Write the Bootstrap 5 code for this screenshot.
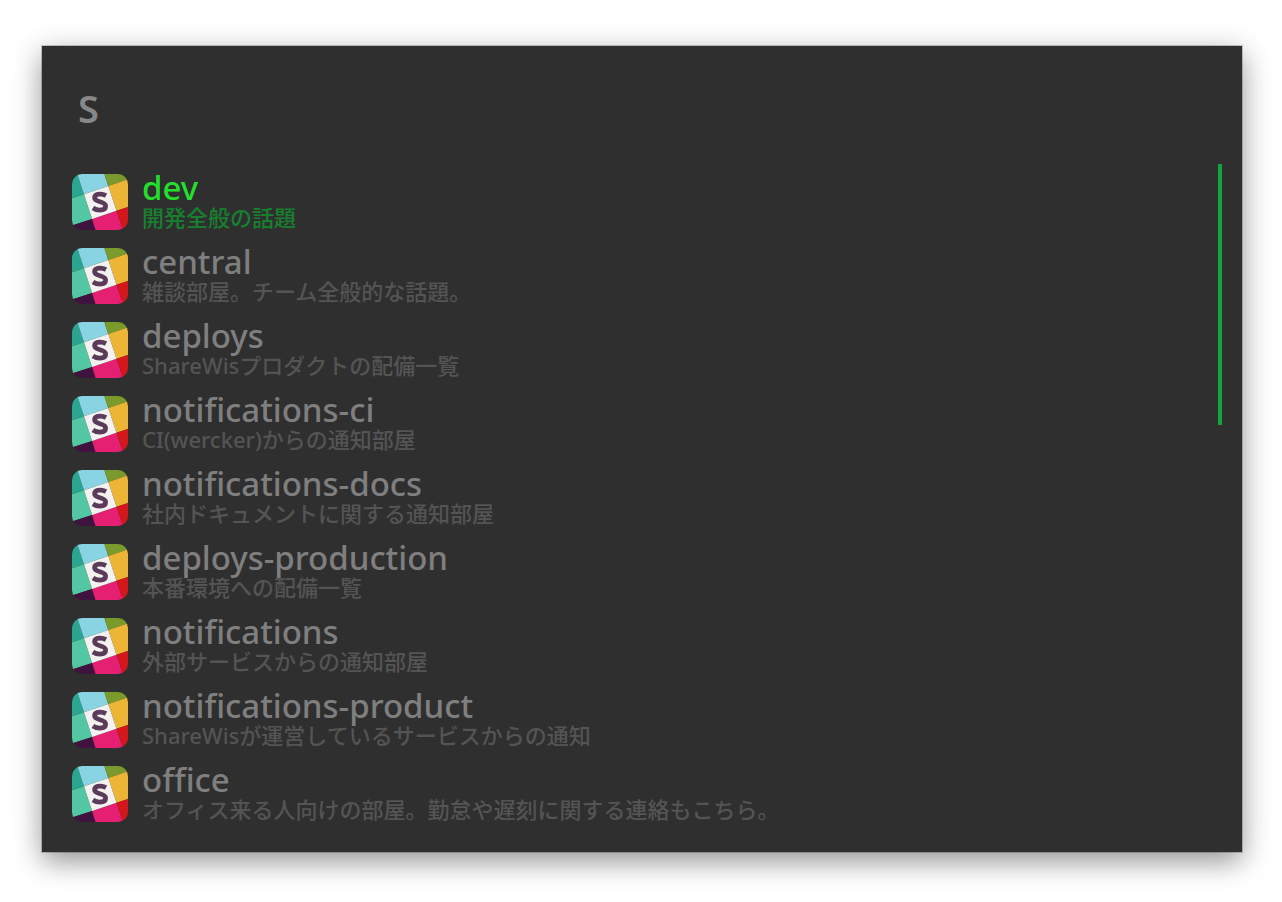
<!DOCTYPE html>
<html lang="ja">
<head>
<meta charset="utf-8">
<meta name="viewport" content="width=device-width, initial-scale=1">
<title>Channels</title>
<link href="https://cdn.jsdelivr.net/npm/bootstrap@5.3.0/dist/css/bootstrap.min.css" rel="stylesheet">
<style>
body { background: #fff; font-family: "Noto Sans", "Noto Sans CJK JP", sans-serif; padding: 46px 40px 50px 42px; }
.launcher { background: #2f2f2f; padding: 36px 20px 30px 30px; box-shadow: 0 0 0 1px rgba(0,0,0,.2), 0 10px 26px rgba(0,0,0,.38), 0 0 36px rgba(0,0,0,.06); }
.query { display: block; width: 100%; height: 52px; padding: 0 6px; background: transparent; border: 0; outline: 0; color: #888; font-size: 38px; font-weight: 600; line-height: 52px; }
.results { margin-top: 30px; }
.channels { padding-top: 10px; gap: 18px; }
.channel { height: 56px; gap: 14px; color: #7f7f7f; text-decoration: none; }
.channel svg { width: 56px; height: 56px; flex: none; border-radius: 10px; }
.channel-name { font-size: 33px; font-weight: 500; line-height: 28px; white-space: nowrap; }
.channel-topic { font-size: 22px; font-weight: 500; line-height: 30px; color: #545454; white-space: nowrap; }
.channel.current .channel-name { color: #23de2b; }
.channel.current .channel-topic { color: #17802f; }
.scroll-thumb { width: 4px; height: 261px; background: #12a53d; }
</style>
</head>
<body>
<svg class="d-none" aria-hidden="true">
  <defs>
    <symbol id="logo" viewBox="0 0 56 56">
      <path fill="#2ba58f" d="M0 0H5.5L12 20.3 0 24.3Z"/>
      <path fill="#88d4e2" d="M5.3 0H32.4L36.3 12 12 20.3Z"/>
      <path fill="#7a9a2c" d="M32.4 0H56V5.3L36.3 12Z"/>
      <path fill="#53c6a4" d="M0 24.3 12 20.3 20.1 45 0 51.5Z"/>
      <path fill="#ecb535" d="M56 5.3V33L44.5 36.7 36.3 12Z"/>
      <path fill="#40123f" d="M0 51.5 20.1 45 23.6 56H0Z"/>
      <path fill="#e52073" d="M20.1 45 44.5 36.7 51 56H23.6Z"/>
      <path fill="#d5161b" d="M44.5 36.7 56 33V56H51Z"/>
      <path fill="#f4f2f1" d="M12 20.3 36.3 12 44.5 36.7 20.1 45Z"/>
      <path fill="none" stroke="#5b3a5a" stroke-width="4.8" d="M34 21.6C31.8 20.4 29.8 20 27.6 20.1 24.3 20.2 22.6 21.8 22.6 23.8 22.6 28.8 33.6 26.6 33.6 32 33.6 34.8 31.2 36.1 28 36.1 25.2 36.1 23 35.4 20.9 34"/>
    </symbol>
  </defs>
</svg>
<main class="launcher">
  <input class="query" type="text" value="S" aria-label="Search channels" spellcheck="false">
  <div class="results d-flex align-items-start">
    <nav class="channels d-flex flex-column flex-grow-1" aria-label="Channels">
      <a class="channel current d-flex" href="#"><svg><use href="#logo"/></svg><span class="d-flex flex-column"><span class="channel-name">dev</span><span class="channel-topic">開発全般の話題</span></span></a>
      <a class="channel d-flex" href="#"><svg><use href="#logo"/></svg><span class="d-flex flex-column"><span class="channel-name">central</span><span class="channel-topic">雑談部屋。チーム全般的な話題。</span></span></a>
      <a class="channel d-flex" href="#"><svg><use href="#logo"/></svg><span class="d-flex flex-column"><span class="channel-name">deploys</span><span class="channel-topic">ShareWisプロダクトの配備一覧</span></span></a>
      <a class="channel d-flex" href="#"><svg><use href="#logo"/></svg><span class="d-flex flex-column"><span class="channel-name">notifications-ci</span><span class="channel-topic">CI(wercker)からの通知部屋</span></span></a>
      <a class="channel d-flex" href="#"><svg><use href="#logo"/></svg><span class="d-flex flex-column"><span class="channel-name">notifications-docs</span><span class="channel-topic">社内ドキュメントに関する通知部屋</span></span></a>
      <a class="channel d-flex" href="#"><svg><use href="#logo"/></svg><span class="d-flex flex-column"><span class="channel-name">deploys-production</span><span class="channel-topic">本番環境への配備一覧</span></span></a>
      <a class="channel d-flex" href="#"><svg><use href="#logo"/></svg><span class="d-flex flex-column"><span class="channel-name">notifications</span><span class="channel-topic">外部サービスからの通知部屋</span></span></a>
      <a class="channel d-flex" href="#"><svg><use href="#logo"/></svg><span class="d-flex flex-column"><span class="channel-name">notifications-product</span><span class="channel-topic">ShareWisが運営しているサービスからの通知</span></span></a>
      <a class="channel d-flex" href="#"><svg><use href="#logo"/></svg><span class="d-flex flex-column"><span class="channel-name">office</span><span class="channel-topic">オフィス来る人向けの部屋。勤怠や遅刻に関する連絡もこちら。</span></span></a>
    </nav>
    <div class="scroll-thumb"></div>
  </div>
</main>
<script src="https://cdn.jsdelivr.net/npm/bootstrap@5.3.0/dist/js/bootstrap.bundle.min.js"></script>
</body>
</html>
